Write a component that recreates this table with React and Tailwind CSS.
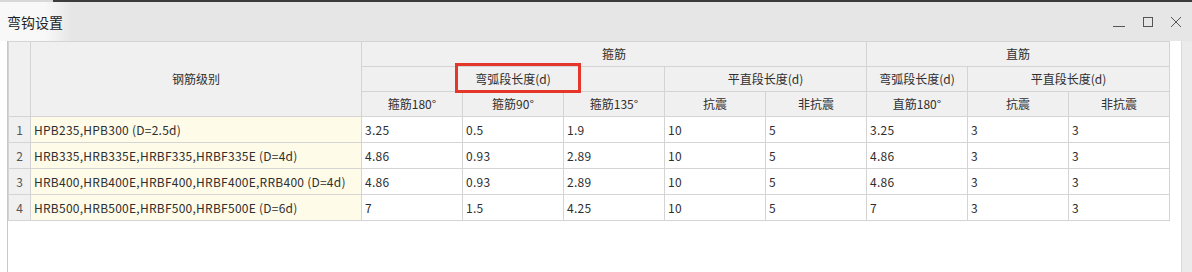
import React from 'react';

const FONT = { fontFamily: '"Noto Sans CJK SC", "Noto Sans", sans-serif' };

const ROWS = [
  ['HPB235,HPB300 (D=2.5d)', '3.25', '0.5', '1.9', '10', '5', '3.25', '3', '3'],
  ['HRB335,HRB335E,HRBF335,HRBF335E (D=4d)', '4.86', '0.93', '2.89', '10', '5', '4.86', '3', '3'],
  ['HRB400,HRB400E,HRBF400,HRBF400E,RRB400 (D=4d)', '4.86', '0.93', '2.89', '10', '5', '4.86', '3', '3'],
  ['HRB500,HRB500E,HRBF500,HRBF500E (D=6d)', '7', '1.5', '4.25', '10', '5', '7', '3', '3'],
];

const th = 'border border-[#d4d4d4] bg-[#f0f0f0] font-normal text-center p-0';
const td = 'border border-[#d4d4d4] pl-[3px] text-left tracking-[0.25px]';

export default function App() {
  return (
    <div className="w-[1192px] h-[272px] overflow-hidden flex flex-col bg-white text-[#2e2e2e]" style={FONT}>
      {/* top edge of the screen behind the dialog */}
      <div className="flex h-[2px]">
        <div className="w-[53px] bg-[#d8d8d8]" />
        <div className="flex-1 bg-[#3c3c3c]" />
      </div>

      {/* title bar */}
      <div className="h-[39px] flex items-center bg-[linear-gradient(to_right,#f8f8f8_45px,#e6e6e6_72px)]">
        <span className="pl-[7px] text-[14px] leading-none text-[#222]">弯钩设置</span>
        <div className="ml-auto flex items-center gap-[16px] pr-[10px] text-[#555]">
          <svg width="14" height="12" viewBox="0 0 14 12" className="mt-[8px]">
            <line x1="1" y1="6.5" x2="13" y2="6.5" stroke="currentColor" strokeWidth="1" />
          </svg>
          <svg width="12" height="12" viewBox="0 0 12 12">
            <rect x="1.5" y="1.5" width="9" height="9" fill="none" stroke="currentColor" strokeWidth="1" />
          </svg>
          <svg width="12" height="12" viewBox="0 0 12 12">
            <path d="M1 1 L11 11 M11 1 L1 11" stroke="currentColor" strokeWidth="1" fill="none" />
          </svg>
        </div>
      </div>

      {/* body */}
      <div className="flex-1 flex pl-[7px]">
        <div className="flex-1 border-l border-[#c8c8c8] flex">
          <div className="relative">
            <table className="table-fixed border-collapse text-[12px] leading-none">
              <colgroup>
                <col className="w-[22px]" />
                <col className="w-[331px]" />
                {Array.from({ length: 8 }).map((_, i) => (
                  <col key={i} className="w-[101px]" />
                ))}
              </colgroup>
              <thead>
                <tr className="h-[25px]">
                  <th rowSpan={3} className={th} />
                  <th rowSpan={3} className={th}>钢筋级别</th>
                  <th colSpan={5} className={th}>箍筋</th>
                  <th colSpan={3} className={th}>直筋</th>
                </tr>
                <tr className="h-[25px]">
                  <th colSpan={3} className={th}>弯弧段长度(d)</th>
                  <th colSpan={2} className={th}>平直段长度(d)</th>
                  <th className={th}>弯弧段长度(d)</th>
                  <th colSpan={2} className={th}>平直段长度(d)</th>
                </tr>
                <tr className="h-[25px]">
                  <th className={th}>箍筋180°</th>
                  <th className={th}>箍筋90°</th>
                  <th className={th}>箍筋135°</th>
                  <th className={th}>抗震</th>
                  <th className={th}>非抗震</th>
                  <th className={th}>直筋180°</th>
                  <th className={th}>抗震</th>
                  <th className={th}>非抗震</th>
                </tr>
              </thead>
              <tbody>
                {ROWS.map((row, i) => (
                  <tr key={i} className="h-[26px]">
                    <td className="border border-[#d4d4d4] bg-[#f0f0f0] text-center text-[#555]">{i + 1}</td>
                    <td className={`${td} bg-[#fffbe9]`}>{row[0]}</td>
                    {row.slice(1).map((v, j) => (
                      <td key={j} className={td}>{v}</td>
                    ))}
                  </tr>
                ))}
              </tbody>
            </table>
            {/* red annotation box */}
            <div className="absolute left-[447px] top-[22px] w-[126px] h-[30px] border-[3px] border-[#e5362a]" />
          </div>
          <div className="flex-1" />
          <div className="w-[11px] bg-[#ebebeb] border-l border-[#dadada]" />
        </div>
      </div>
    </div>
  );
}
